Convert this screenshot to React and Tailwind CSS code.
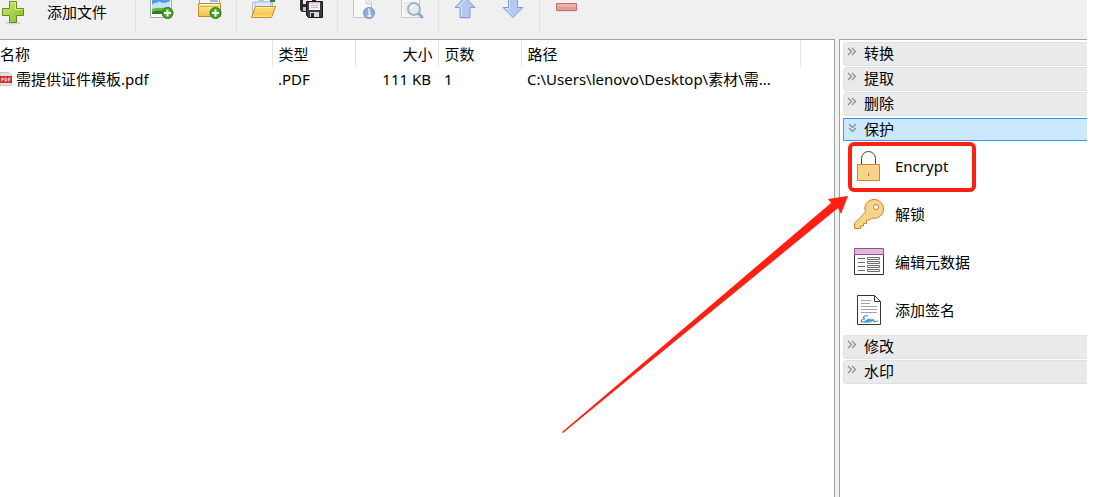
import { useState } from "react";

function AddIcon() {
  return (
    <svg width="26" height="26" viewBox="0 0 26 26">
      <ellipse cx="13" cy="23" rx="8" ry="1.5" fill="#d4d4d4" />
      <path
        d="M9.5 1.5h7v7h7v7h-7v7h-7v-7h-7v-7h7z"
        fill="url(#addFill)"
        stroke="#628f1c"
        strokeLinejoin="round"
      />
      <path d="M10.5 2.5h5v7h7" fill="none" stroke="#dff08c" />
      <defs>
        <linearGradient id="addFill" x1="0" y1="0" x2="1" y2="1">
          <stop offset="0" stopColor="#d3ea6c" />
          <stop offset="1" stopColor="#85b92c" />
        </linearGradient>
      </defs>
    </svg>
  );
}

function PlusBadge() {
  return (
    <g>
      <circle cx="18.5" cy="13" r="5.5" fill="#43a427" stroke="#2b7c18" />
      <path d="M18.5 9.5v7M15 13h7" stroke="#fff" strokeWidth="2" />
    </g>
  );
}

function ImageAddIcon() {
  return (
    <svg width="26" height="24" viewBox="0 0 26 24">
      <path d="M1.5 -4h21v21.5h-21z" fill="#fff" stroke="#a3a8b0" />
      <path d="M3 0h18v14H3z" fill="#4f9be3" />
      <path d="M3 5q2-3 5-2 2-3 5 0 5 0 8-2v10H3z" fill="#c4e3fa" />
      <path d="M3 9q5-2 9-1l9-1v7H3z" fill="#6fb63c" />
      <path d="M3 12q5-2 10-1l8 3H3z" fill="#2f7a35" />
      <PlusBadge />
    </svg>
  );
}

function FolderAddIcon() {
  return (
    <svg width="26" height="24" viewBox="0 0 26 24">
      <path d="M2.5-4h20v8h-20z" fill="#f1f6fd" stroke="#9a9fac" />
      <path d="M13 0h8v2h-8z" fill="#9abbe4" />
      <path d="M1.5 3.5h22v13h-22z" fill="url(#boxFill)" stroke="#bf8a2a" />
      <path d="M3 4.5h19" stroke="#fff6cf" />
      <path d="M3 6.500h19" stroke="#e0b04a" />
      <PlusBadge />
      <defs>
        <linearGradient id="boxFill" x1="0" y1="0" x2="0" y2="1">
          <stop offset="0" stopColor="#fdeaa8" />
          <stop offset="1" stopColor="#f3c149" />
        </linearGradient>
      </defs>
    </svg>
  );
}

function OpenFolderIcon() {
  return (
    <svg width="26" height="24" viewBox="0 0 26 24">
      <path d="M2.5 15V2.500h6l1-2h4l1 2h8V8" fill="#f4f6fa" stroke="#b4b9c2" />
      <path d="M5 2h16v5H5z" fill="#dceafb" stroke="#9db9de" />
      <path d="M20 0h5v2h-5z" fill="#278a2b" />
      <path d="M5.5 6.500h20l-4 11H1.500z" fill="url(#folderFill)" stroke="#c38e2b" strokeLinejoin="round" />
      <path d="M6.5 7.500h17.500" stroke="#fff0b6" />
      <defs>
        <linearGradient id="folderFill" x1="0" y1="0" x2="0" y2="1">
          <stop offset="0" stopColor="#fbdf92" />
          <stop offset="0.7" stopColor="#f8c94e" />
          <stop offset="1" stopColor="#fde79a" />
        </linearGradient>
      </defs>
    </svg>
  );
}

function SaveAllIcon() {
  return (
    <svg width="26" height="24" viewBox="0 0 26 24">
      <path d="M2 0h16v12H4l-2-2z" fill="#2b2b33" />
      <path d="M5 0h9v4H5z" fill="#f2e9ee" />
      <path d="M5 7h3v4H5z" fill="#c5c5cc" />
      <path d="M8.500 1.500h16v16h-14l-2-2z" fill="#3b3b45" stroke="#17171c" />
      <path d="M11 2h11v8H11z" fill="#f7f1f4" />
      <path d="M11 2h11v1.500H11z" fill="#e0b3bf" />
      <path d="M13 5.500h7M13 7.500h7" stroke="#c5b5bd" />
      <path d="M12 12h9v5h-9z" fill="#d8d8de" />
      <path d="M13 13h3v4h-3z" fill="#25252c" />
    </svg>
  );
}

function DocInfoIcon() {
  return (
    <svg width="26" height="24" viewBox="0 0 26 24">
      <path d="M2.500-4v21.500h18V3l-3-3" fill="#f8f8f8" stroke="#c6c6c6" />
      <path d="M15 0v4h5" fill="#e9e9e9" stroke="#cfcfcf" />
      <circle cx="18" cy="13" r="5.500" fill="#8facdc" stroke="#7793c8" />
      <path d="M17 12h1.500v4M16.500 16h4" fill="none" stroke="#fff" strokeWidth="1.500" />
      <circle cx="18" cy="9.500" r="1" fill="#fff" />
    </svg>
  );
}

function DocSearchIcon() {
  return (
    <svg width="26" height="24" viewBox="0 0 26 24">
      <path d="M2.500-4v21.500h18V0" fill="#f6f6f6" stroke="#c9c9c9" />
      <path d="M5 3h11M5 6h5M5 9h4M5 12h5" stroke="#dedede" />
      <path d="M19 13l4 4" stroke="#86a7d9" strokeWidth="3" strokeLinecap="round" />
      <circle cx="15" cy="9" r="6" fill="#dcebf5" stroke="#a9b0b8" strokeWidth="2" />
      <path d="M11.5 8.5q1-3 4-3" fill="none" stroke="#fff" strokeWidth="1.500" />
    </svg>
  );
}

function ArrowUpIcon() {
  return (
    <svg width="24" height="24" viewBox="0 0 24 24">
      <ellipse cx="12" cy="18" rx="6" ry="1" fill="#d8d8d8" />
      <path d="M12-3L22 7.500h-5v10H7v-10H2z" fill="#b4c8f2" stroke="#829cd4" strokeLinejoin="round" />
      <path d="M8.500 16V6.500H5L12 0" fill="none" stroke="#dae5fb" />
    </svg>
  );
}

function ArrowDownIcon() {
  return (
    <svg width="24" height="24" viewBox="0 0 24 24">
      <path d="M7.500-2v9.500H2l10 10 10-10h-5.500V-2z" fill="#b4c8f2" stroke="#829cd4" strokeLinejoin="round" />
      <path d="M8.500 0v8.500H5l7 7" fill="none" stroke="#dae5fb" />
    </svg>
  );
}

function RemoveIcon() {
  return (
    <svg width="24" height="24" viewBox="0 0 24 24">
      <path d="M1.500 3.500h20v7h-20z" fill="#e49b9b" stroke="#c27272" />
      <path d="M2.500 4.500h18v2h-18z" fill="#efb8b5" />
      <path d="M2 11.500h19" stroke="#dedede" />
    </svg>
  );
}

function PdfIcon() {
  return (
    <svg width="12" height="16" viewBox="0 0 12 16" className="shrink-0">
      <path d="M0 1.500h9l2.500 2.500v10.500H0z" fill="#e2e2e2" stroke="#c4c4c4" />
      <path d="M0 5h12v7H0z" fill="#dc2430" />
      <path
        d="M1.500 10.500V7h1q1 0 1 1t-2 1M5 10.500V7q2 0 2 1.700T5 10.500M8.700 10.500V7h2M8.700 8.800h1.500"
        fill="none"
        stroke="#fff"
        strokeWidth="0.8"
      />
    </svg>
  );
}

function LockIcon() {
  return (
    <svg width="32" height="32" viewBox="0 0 32 32">
      <path d="M8.500 14V8.500a7 7 0 0 1 14 0V14" fill="none" stroke="#404040" />
      <path d="M4.500 14.500h22v16h-22z" fill="#f5d58b" stroke="#e07b2c" />
      <path d="M15.500 23v3" stroke="#e0702c" />
    </svg>
  );
}

function KeyIcon() {
  return (
    <svg width="32" height="32" viewBox="0 0 32 32">
      <path
        d="M1.500 30.500v-5l11-11.500C10 7 15 1.500 21 1.500c5.500 0 9.500 4.500 9.500 9.500 0 6-5 10.500-12 9l-2 2h-3v3.500h-3V28H7.500v2.500z"
        fill="#f5d58b"
        stroke="#e07b2c"
      />
      <circle cx="23" cy="9" r="2.500" fill="#fff" stroke="#e07b2c" />
    </svg>
  );
}

function MetadataIcon() {
  return (
    <svg width="32" height="32" viewBox="0 0 32 32">
      <path d="M1.500 3.500h29v25h-29z" fill="#fbfaff" stroke="#343434" />
      <path d="M1.500 2.500h29v6h-29z" fill="#dfb9d7" stroke="#9b4c9b" />
      <path d="M5 12.500h7M5 16.500h7M5 20.500h7M5 24.500h7" stroke="#6e6e6e" />
      <path
        d="M14.500 11.500h12v2h-12zM14.500 15.500h12v2h-12zM14.500 19.500h12v2h-12zM14.500 23.500h12v2h-12z"
        fill="#fff"
        stroke="#6e6e6e"
      />
    </svg>
  );
}

function SignatureIcon() {
  return (
    <svg width="32" height="32" viewBox="0 0 32 32">
      <path d="M4.500 1.500h17l6 6v23h-23z" fill="#fff" stroke="#343434" />
      <path d="M21.500 1.500v6h6" fill="none" stroke="#343434" />
      <path d="M8 6.500h10M8 9.500h9M8 12.500h16M8 15.500h16M8 18.500h16" stroke="#a3a3a3" />
      <path
        d="M15 22c-4-1-6 2-3 3-4 0-5 3-2 3 3 0 5-3 6-3l-1 2.500 3-2 0 2 2-2 1 2 4-.5M8 28h9"
        fill="none"
        stroke="#3a92cf"
        strokeWidth="1.200"
      />
    </svg>
  );
}

const toolGroups = [
  [
    { label: "添加图片", icon: <ImageAddIcon /> },
    { label: "添加文件夹", icon: <FolderAddIcon /> },
  ],
  [
    { label: "打开", icon: <OpenFolderIcon /> },
    { label: "全部保存", icon: <SaveAllIcon /> },
  ],
  [
    { label: "信息", icon: <DocInfoIcon /> },
    { label: "预览", icon: <DocSearchIcon /> },
  ],
  [
    { label: "上移", icon: <ArrowUpIcon /> },
    { label: "下移", icon: <ArrowDownIcon /> },
  ],
];

const protectTools = [
  { label: "Encrypt", icon: <LockIcon />, marked: true },
  { label: "解锁", icon: <KeyIcon /> },
  { label: "编辑元数据", icon: <MetadataIcon /> },
  { label: "添加签名", icon: <SignatureIcon /> },
];

const sections = [
  { label: "转换", tools: [] },
  { label: "提取", tools: [] },
  { label: "删除", tools: [] },
  { label: "保护", tools: protectTools },
  { label: "修改", tools: [] },
  { label: "水印", tools: [] },
];

const files = [
  {
    name: "需提供证件模板.pdf",
    type: ".PDF",
    size: "111 KB",
    pages: 1,
    path: "C:\\Users\\lenovo\\Desktop\\素材\\需...",
  },
];

function Toolbar() {
  return (
    <header className="flex h-[39px] shrink-0 items-start overflow-hidden">
      <button className="flex h-[33px] w-[136px] items-start border-r border-[#e0e0e0]">
        <AddIcon />
        <span className="ml-[21px] leading-6">添加文件</span>
      </button>
      {toolGroups.map((group, i) => (
        <div key={i} className="flex h-[33px] w-[101px] border-r border-[#e0e0e0] px-[2px]">
          {group.map((tool) => (
            <button key={tool.label} aria-label={tool.label} className="flex w-12 justify-center">
              {tool.icon}
            </button>
          ))}
        </div>
      ))}
      <button aria-label="移除" className="ml-[3px] flex w-12 justify-center">
        <RemoveIcon />
      </button>
    </header>
  );
}

function FileTable() {
  return (
    <table className="w-full table-fixed text-left">
      <colgroup>
        <col className="w-[272px]" />
        <col className="w-[83px]" />
        <col className="w-[83px]" />
        <col className="w-[83px]" />
        <col className="w-[279px]" />
        <col />
      </colgroup>
      <thead>
        <tr className="h-[27px] font-normal *:font-normal [&>th]:border-r [&>th]:border-[#e5e5e5]">
          <th>名称</th>
          <th className="pl-[6px]">类型</th>
          <th className="pr-[5px] text-right">大小</th>
          <th className="pl-[6px]">页数</th>
          <th className="pl-[6px]">路径</th>
          <td />
        </tr>
      </thead>
      <tbody>
        {files.map((file) => (
          <tr key={file.name} className="h-[23px] whitespace-nowrap">
            <td>
              <span className="flex items-center gap-1">
                <PdfIcon />
                {file.name}
              </span>
            </td>
            <td className="pl-[6px]">{file.type}</td>
            <td className="pr-[7px] text-right">{file.size}</td>
            <td className="pl-[6px]">{file.pages}</td>
            <td className="pl-[6px]">{file.path}</td>
            <td />
          </tr>
        ))}
      </tbody>
    </table>
  );
}

function Chevrons({ open }) {
  return (
    <svg
      width="10"
      height="10"
      viewBox="0 0 10 10"
      fill="none"
      stroke="#8f8f8f"
      strokeWidth="1.3"
      className={open ? "rotate-90" : ""}
    >
      <path d="M1 1l3.500 3.500-3.500 3.500M5 1l3.500 3.500-3.500 3.500" />
    </svg>
  );
}

// the red arrow ends at the lower left corner of the marked tool
function PointerArrow() {
  return (
    <svg
      className="pointer-events-none absolute top-[54px] right-full"
      width="288"
      height="238"
      viewBox="0 0 288 238"
    >
      <path d="M2 236L271 7 268 3 288 0 281 18 278 12 3 237z" fill="#ff2013" />
    </svg>
  );
}

function ToolItem({ tool }) {
  return (
    <div className="relative">
      <button className="flex h-12 w-full items-center gap-[10px] pl-[10px] text-left">
        {tool.icon}
        {tool.label}
      </button>
      {tool.marked && (
        <div className="pointer-events-none absolute top-0 left-[5px] h-[50px] w-[128px] rounded-md border-4 border-[#ff2013]">
          <div className="absolute -top-1 -left-1">
            <PointerArrow />
          </div>
        </div>
      )}
    </div>
  );
}

function Section({ section, open, onToggle }) {
  return (
    <section>
      <button
        onClick={onToggle}
        aria-expanded={open}
        className={
          open
            ? "mt-px flex h-[23px] w-full items-center border border-r-0 border-[#3399ff] bg-[#cce8ff] pb-[2px]"
            : "flex h-6 w-full items-center rounded-l border border-r-0 border-[#dfe0e2] bg-[#e9eaec] pb-[2px]"
        }
      >
        <span className="flex h-full w-5 items-start pt-1 pl-[3px]">
          <Chevrons open={open} />
        </span>
        {section.label}
      </button>
      {open && section.tools.length > 0 && (
        <div className="pt-px">
          {section.tools.map((tool) => (
            <ToolItem key={tool.label} tool={tool} />
          ))}
        </div>
      )}
    </section>
  );
}

export default function App() {
  const [active, setActive] = useState("保护");

  return (
    <div className="min-h-screen bg-white pr-[13px] font-['Noto_Sans','Noto_Sans_CJK_SC',sans-serif] text-[15px] leading-5 text-black">
      <div className="flex min-h-screen flex-col overflow-hidden bg-[#f0f0f0]">
        <Toolbar />
        <div className="flex grow gap-1">
          <main className="min-w-0 grow border-t border-r border-[#a0a0a0] bg-white">
            <FileTable />
          </main>
          <aside className="flex w-[248px] shrink-0 flex-col gap-px border-t border-l border-[#a0a0a0] bg-white pt-[2px] pl-[3px]">
            {sections.map((section) => (
              <Section
                key={section.label}
                section={section}
                open={active === section.label}
                onToggle={() => setActive(active === section.label ? "" : section.label)}
              />
            ))}
          </aside>
        </div>
      </div>
    </div>
  );
}
